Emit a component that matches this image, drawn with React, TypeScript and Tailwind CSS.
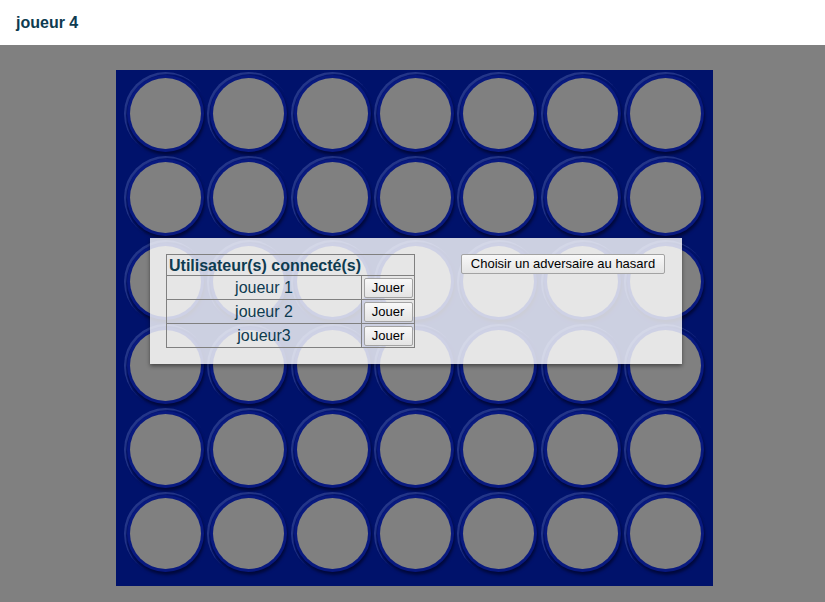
import React from "react";

const players = ["joueur 1", "joueur 2", "joueur3"];

function Hole() {
  return (
    <div className="flex h-[83px] w-[83px] items-center justify-center rounded-full shadow-[inset_2px_2px_1px_rgba(120,140,210,0.3)]">
      <div className="flex h-[77px] w-[77px] items-center justify-center rounded-full bg-[#08197f] shadow-[1px_3px_3px_rgba(0,0,20,0.55)]">
        <div className="h-[71px] w-[71px] rounded-full bg-[#808080]" />
      </div>
    </div>
  );
}

function PlayButton({ label, className = "" }: { label: string; className?: string }) {
  return (
    <button
      className={
        "rounded-[2px] border border-[#a3a3a3] bg-gradient-to-b from-[#f8f8f8] to-[#e4e4e4] text-[13px] leading-[18px] text-black " +
        className
      }
    >
      {label}
    </button>
  );
}

export default function App() {
  const cells = Array.from({ length: 42 });

  return (
    <div className="min-h-screen bg-[#808080] font-['Liberation_Sans',Arial,sans-serif]">
      <header className="flex h-[45px] items-center bg-white px-4">
        <h1 className="text-[16px] font-bold text-[#0e3b50]">joueur 4</h1>
      </header>

      <div className="pt-[25px] pb-4">
        <div className="relative ml-[116px] h-[516px] w-[597px] bg-[#00126b] pl-[8px] pt-[1px]">
          <div className="grid grid-cols-[repeat(7,83.33px)] grid-rows-[repeat(6,84px)]">
            {cells.map((_, i) => (
              <div key={i} className="flex items-center justify-center">
                <Hole />
              </div>
            ))}
          </div>

          <div className="absolute left-[34px] top-[168px] flex h-[126px] w-[532px] items-start bg-white/80 p-4 shadow-[0_2px_4px_rgba(0,0,0,0.45)]">
            <table className="w-[249px] border-collapse text-[#0e3b50]">
              <thead>
                <tr>
                  <th
                    colSpan={2}
                    className="h-[21px] border border-[#808080] px-[2px] text-left text-[16px] font-bold leading-[19px]"
                  >
                    Utilisateur(s) connecté(s)
                  </th>
                </tr>
              </thead>
              <tbody>
                {players.map((p) => (
                  <tr key={p}>
                    <td className="h-[24px] border border-[#808080] text-center text-[16px] leading-[20px]">{p}</td>
                    <td className="h-[24px] w-[53px] border border-[#808080] px-[1px] py-0 leading-[20px]">
                      <PlayButton label="Jouer" className="mx-auto block h-[20px] w-[49px]" />
                    </td>
                  </tr>
                ))}
              </tbody>
            </table>

            <PlayButton label="Choisir un adversaire au hasard" className="ml-[46px] h-[20px] w-[204px]" />
          </div>
        </div>
      </div>
    </div>
  );
}
